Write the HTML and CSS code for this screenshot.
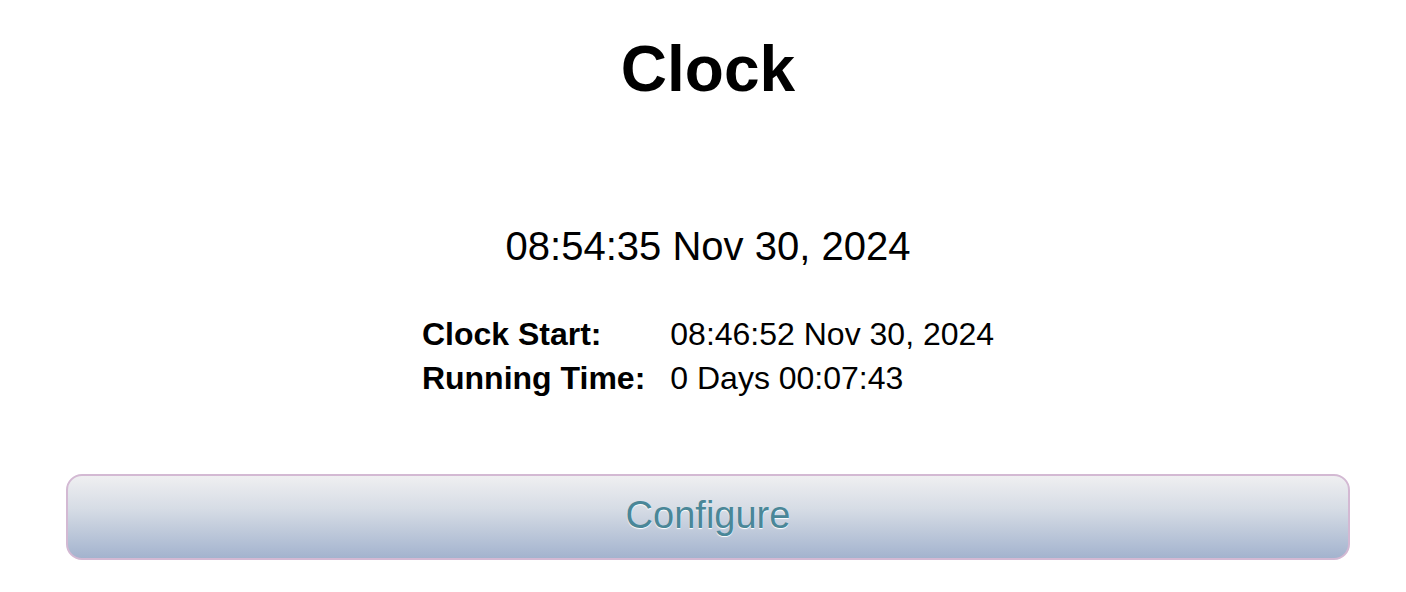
FILE: index.html
```html
<!DOCTYPE html>
<html>
<head>
<meta charset="utf-8">
<title>Clock</title>
<link rel="stylesheet" href="styles.css">
</head>
<body>
<div class="page">
  <h1 class="title">Clock</h1>
  <div class="now">08:54:35 Nov 30, 2024</div>
  <div class="info">
    <div class="label">Clock Start:</div>
    <div class="value">08:46:52 Nov 30, 2024</div>
    <div class="label">Running Time:</div>
    <div class="value">0 Days 00:07:43</div>
  </div>
  <button class="configure" type="button">Configure</button>
</div>
</body>
</html>
```

FILE: styles.css
```css
html, body {
  margin: 0;
  padding: 0;
  background: #ffffff;
}

body {
  font-family: "Liberation Sans", Arial, sans-serif;
  color: #000000;
}

.page {
  display: flex;
  flex-direction: column;
  align-items: center;
  padding: 37px 56px 0 66px;
}

.title {
  margin: 0;
  font-size: 64px;
  line-height: 1;
  font-weight: bold;
}

.now {
  margin-top: 125px;
  font-size: 40px;
  line-height: 1;
}

.info {
  margin-top: 46px;
  display: grid;
  grid-template-columns: auto auto;
  column-gap: 25px;
  font-size: 32px;
  line-height: 44px;
}

.label {
  font-weight: bold;
}

.configure {
  margin-top: 74px;
  align-self: stretch;
  height: 86px;
  box-sizing: border-box;
  border: 2px solid #d3b9d3;
  border-radius: 16px;
  background: linear-gradient(to bottom, #efeff1 0%, #d6dce5 40%, #a3b3ce 100%);
  font-family: "Liberation Sans", Arial, sans-serif;
  font-size: 38px;
  color: #4a8798;
  text-shadow: 0 1px 1px #ffffff;
  padding: 0 0 3px 0;
  cursor: pointer;
}
```
